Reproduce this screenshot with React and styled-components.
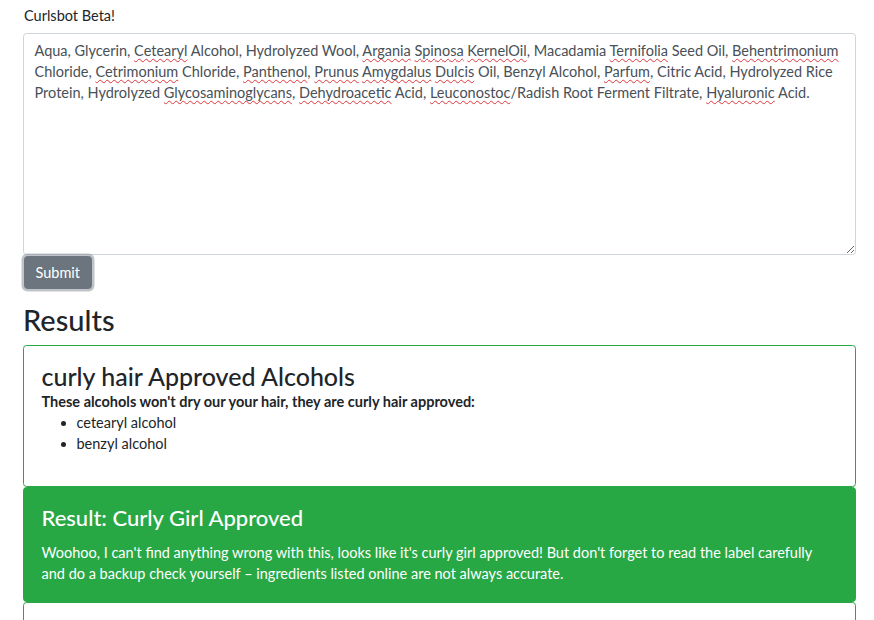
import React from "react";
import styled, { createGlobalStyle } from "styled-components";

const GlobalStyle = createGlobalStyle`
  html, body {
    margin: 0;
    padding: 0;
    background: #fff;
  }
  body {
    font-family: Lato, "Open Sans", sans-serif;
    font-size: 14.5px;
    line-height: 1.5;
    color: #212529;
  }
  * {
    box-sizing: border-box;
  }
`;

const Page = styled.div`
  padding: 5px 18px 0 23px;
  height: 620px;
  overflow: hidden;
`;

const Label = styled.label`
  display: block;
  margin-bottom: 6px;
  padding-left: 1px;
`;

const Field = styled.div`
  height: 222px;
  padding: 6px 10.5px;
  border: 1px solid #ced4da;
  border-radius: 3.5px;
  color: #495057;
  background: #fff;
  line-height: 21px;
  resize: vertical;
  overflow: auto;
`;

const Misspelled = styled.span`
  text-decoration: underline wavy #e0363a;
  text-decoration-thickness: 1px;
  text-underline-offset: 2px;
  text-decoration-skip-ink: none;
`;

const SubmitButton = styled.button`
  display: block;
  margin: 1px 0 0 1px;
  padding: 5px 10.5px;
  font: inherit;
  line-height: 21px;
  color: #fff;
  background: #6c757d;
  border: 1px solid #6c757d;
  border-radius: 3.5px;
  box-shadow: 0 0 0 2.5px rgba(130, 138, 145, 0.5);
`;

const Heading = styled.h2`
  margin: 14px 0 7px;
  font-size: 29px;
  font-weight: 500;
  line-height: 1.2;
`;

const Card = styled.div`
  border: 1px solid #28a745;
  border-radius: 3.5px;
  padding: 17.5px;
  background: ${(p) => (p.$filled ? "#28a745" : "#fff")};
  color: ${(p) => (p.$filled ? "#fff" : "#212529")};
  min-height: ${(p) => p.$minHeight || "auto"};
`;

const CardTitle = styled.h3`
  margin: ${(p) => (p.$filled ? "0 0 10.5px" : "-2px 0 1px")};
  font-size: ${(p) => (p.$filled ? "22px" : "25px")};
  font-weight: 500;
  line-height: 1.2;
`;

const Lead = styled.div`
  font-weight: 700;
  line-height: 20px;
`;

const List = styled.ul`
  margin: 0 0 14px;
  padding-left: 35px;
  line-height: 21px;
`;

const Text = styled.p`
  margin: 0;
  line-height: 21px;
`;

const words = [
  "Aqua, Glycerin, ",
  ["Cetearyl"],
  " Alcohol, Hydrolyzed Wool, ",
  ["Argania"],
  " ",
  ["Spinosa"],
  " ",
  ["KernelOil"],
  ", Macadamia ",
  ["Ternifolia"],
  " Seed Oil, ",
  ["Behentrimonium"],
  " Chloride, ",
  ["Cetrimonium"],
  " Chloride, ",
  ["Panthenol"],
  ", ",
  ["Prunus"],
  " ",
  ["Amygdalus"],
  " ",
  ["Dulcis"],
  " Oil, Benzyl Alcohol, ",
  ["Parfum"],
  ", Citric Acid, Hydrolyzed Rice Protein, Hydrolyzed ",
  ["Glycosaminoglycans"],
  ", ",
  ["Dehydroacetic"],
  " Acid, ",
  ["Leuconostoc"],
  "/Radish Root Ferment Filtrate, ",
  ["Hyaluronic"],
  " Acid.",
];

export default function App() {
  return (
    <Page>
      <GlobalStyle />
      <Label>Curlsbot Beta!</Label>
      <Field>
        {words.map((w, i) =>
          Array.isArray(w) ? <Misspelled key={i}>{w[0]}</Misspelled> : w
        )}
      </Field>
      <SubmitButton>Submit</SubmitButton>
      <Heading>Results</Heading>
      <Card>
        <CardTitle>curly hair Approved Alcohols</CardTitle>
        <Lead>These alcohols won't dry our your hair, they are curly hair approved:</Lead>
        <List>
          <li>cetearyl alcohol</li>
          <li>benzyl alcohol</li>
        </List>
      </Card>
      <Card $filled>
        <CardTitle $filled>Result: Curly Girl Approved</CardTitle>
        <Text>
          Woohoo, I can't find anything wrong with this, looks like it's curly girl approved! But
          don't forget to read the label carefully and do a backup check yourself – ingredients
          listed online are not always accurate.
        </Text>
      </Card>
      <Card $minHeight="60px" />
    </Page>
  );
}
